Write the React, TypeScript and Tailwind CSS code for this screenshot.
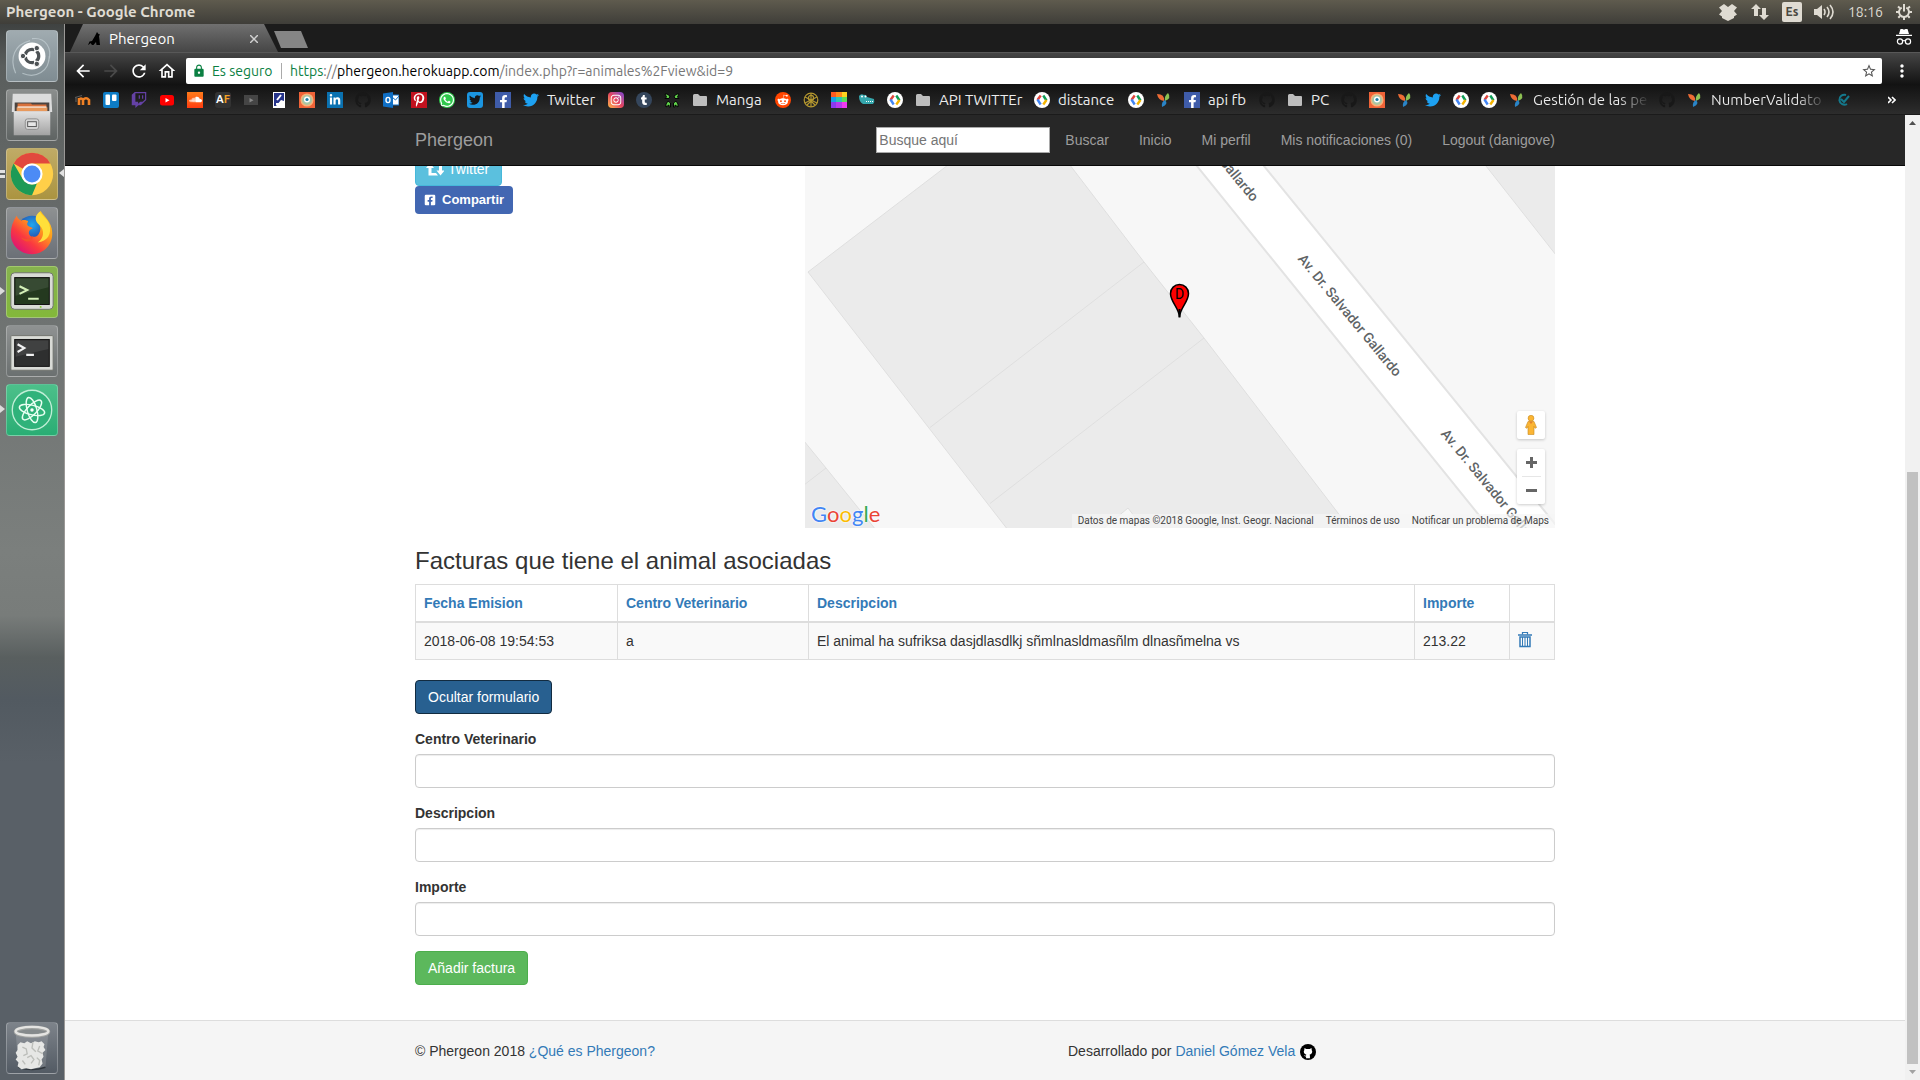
import React from "react";
import {
  FaFacebookF,
  FaFacebookSquare,
  FaGithub,
  FaInstagram,
  FaLinkedinIn,
  FaPinterestP,
  FaRedditAlien,
  FaSoundcloud,
  FaTumblr,
  FaTwitch,
  FaTwitter,
  FaWhatsapp,
} from "react-icons/fa";
import { MdArrowBack, MdArrowForward, MdLock, MdMoreVert, MdOutlineHome, MdRefresh, MdStarBorder } from "react-icons/md";

const UI_FONT = "font-['Ubuntu','Noto_Sans',sans-serif]";

/* ---------- System panel ---------- */

function SystemPanel() {
  return (
    <header className="flex h-6 shrink-0 items-center justify-between bg-linear-to-b from-[#5f5b4e] to-[#3f3e39] pr-2 pl-[6px] text-[#dfdbd2]">
      <h1 className="text-[15px] font-bold">Phergeon - Google Chrome</h1>
      <div className="flex items-center">
        <svg viewBox="0 0 18 17" className="mr-[14px] h-[17px] w-[18px]" fill="currentColor">
          <path d="M5 0 9 3l4-3 5 3.500-3 3.500 3 3.500-3 2V14l-6 3-6-3v-1.500l-3-2L3 7 0 3.500z" />
        </svg>
        <svg viewBox="0 0 18 16" className="mr-[13px] h-4 w-[18px]" fill="currentColor">
          <path d="M5 0 10 5H7v7H3V5H0zM13 16 8 11h3V4h4v7h3z" />
        </svg>
        <span className="mr-3 flex size-5 items-center justify-center rounded-[2px] bg-[#dfdbd2] text-[12px] font-semibold text-[#4a483f]">Es</span>
        <svg viewBox="0 0 20 16" className="mr-[14px] h-4 w-5" fill="currentColor">
          <path d="M0 5h3l5-4v14l-5-4H0z" />
          <path d="M10 5q2 3 0 6M13 3q4 5 0 10M16 1q6 7 0 14" fill="none" stroke="currentColor" strokeWidth="1.600" />
        </svg>
        <span className="mr-[13px] text-[14px]">18:16</span>
        <svg viewBox="0 0 16 16" className="size-4" fill="none" stroke="currentColor">
          <path d="M5.700 3.600a5 5 0 1 0 4.600 0" strokeWidth="2" />
          <path d="M8 0v7.500" strokeWidth="2" />
          <path d="M2 2.500 4 4.300M12 4.300l2-1.800M0 8h3M13 8h3M2.300 13.700 4 12M12 12l1.700 1.700M8 13v3" strokeWidth="2" />
        </svg>
      </div>
    </header>
  );
}

/* ---------- Launcher ---------- */

function UbuntuIcon() {
  return (
    <svg viewBox="0 0 52 52" className="size-full">
      <g fill="none" stroke="#c5d0d4" strokeWidth="1.200" opacity=".7">
        <path d="M26 8C40 6 48 18 43 32M9 44C2 28 8 14 24 10M44 26C44 42 30 50 16 44" />
      </g>
      <circle cx="26" cy="26" r="14" fill="#fff" />
      <circle cx="26" cy="26" r="7" fill="none" stroke="#4d5255" strokeWidth="3.400" strokeDasharray="12.4 2.26" strokeDashoffset="-8.5" />
      <g fill="#4d5255" stroke="#fff" strokeWidth="1">
        <circle cx="16.600" cy="26" r="2.800" />
        <circle cx="31" cy="17.800" r="2.800" />
        <circle cx="31" cy="34.200" r="2.800" />
      </g>
    </svg>
  );
}

function FilesIcon() {
  return (
    <svg viewBox="0 0 52 52" className="size-full">
      <defs>
        <linearGradient id="cabinet" x1="0" y1="0" x2="0" y2="1">
          <stop offset="0" stopColor="#e2e2e2" />
          <stop offset="1" stopColor="#a2a2a2" />
        </linearGradient>
      </defs>
      <path d="M6 4h40l1 19H5z" fill="#dcdcdc" />
      <path d="M8 13h36v9H8z" fill="#4b4440" />
      <path d="M11 14h14l1 1h15v7H11z" fill="#d9703a" />
      <path d="M10 18h32v4H10z" fill="#e8995c" />
      <path d="M11 17h30v1.500H11z" fill="#f7e4d4" />
      <path d="M7 22h38v25H7z" fill="url(#cabinet)" />
      <rect x="19" y="30" width="14" height="11" rx="2.500" fill="#d4d4d4" stroke="#8f8f8f" />
      <rect x="21.500" y="33" width="9" height="5" fill="#e6e6e6" stroke="#555" />
    </svg>
  );
}

function ChromeIcon() {
  return (
    <svg viewBox="-26 -26 52 52" className="size-full">
      <circle r="22" fill="#ffcf48" />
      <path d="M0-22A22 22 0 0 1 19.05-11H0A11 11 0 0 0-9.53-5.5L-19.05-11A22 22 0 0 1 0-22z" fill="#e2483d" />
      <path d="M-19.05-11-9.53 5.5A11 11 0 0 0 5.2 9.6L0 22A22 22 0 0 1-19.05-11z" fill="#1d9a56" />
      <circle r="11" fill="#fff" />
      <circle r="8.800" fill="#4c8bf5" />
    </svg>
  );
}

function FirefoxIcon() {
  return (
    <svg viewBox="0 0 52 52" className="size-full">
      <defs>
        <linearGradient id="fox" x1="1" y1="0" x2=".2" y2="1">
          <stop offset="0" stopColor="#ffe226" />
          <stop offset=".4" stopColor="#ff9a1c" />
          <stop offset=".7" stopColor="#fb3a3f" />
          <stop offset="1" stopColor="#d80f7c" />
        </linearGradient>
        <radialGradient id="globe" cx=".5" cy=".3">
          <stop offset="0" stopColor="#1fa8f0" />
          <stop offset="1" stopColor="#2648a8" />
        </radialGradient>
      </defs>
      <circle cx="26" cy="24" r="16" fill="url(#globe)" />
      <path
        d="M10 8c1 2 2 4 5 5 3-1 6 0 7 1-2 3-1 5 3 6l2 1c-3 1-5 3-4 6 1 4 8 4 10 0 4-6 0-12-3-15 0-3 2-7 5-9 3 5 12 12 12 22 1 13-9 23-21 23S4 39 4 27c0-7 2-13 6-19z"
        fill="url(#fox)"
      />
      <path d="M34 4c-6 5-5 10 0 14 5 5 5 13-2 18 10-1 15-9 12-19-2-6-7-8-10-13z" fill="#ffdf3a" />
      <path d="M14 30c4 3 8 3 13-1 0 6-8 9-13 1z" fill="#f3502f" />
    </svg>
  );
}

function TerminalIcon({ green }: { green?: boolean }) {
  return (
    <svg viewBox="0 0 52 52" className="size-full">
      <rect x="4" y={green ? 6 : 10} width="44" height={green ? 38 : 36} rx={green ? 4 : 1} fill="#d9dbd6" stroke="#6f736c" />
      <rect x="8" y={green ? 11 : 14} width="36" height="28" fill={green ? "#24391f" : "#2e2f2f"} stroke="#111" />
      <path d={green ? "M9 12h34v9L9 30z" : "M9 15h34v9L9 32z"} fill="#fff" opacity=".09" />
      <path
        d={green ? "m13 20 8 4-8 4M22 33h11" : "m11 19 7 4-7 4M20 30h8"}
        fill="none"
        stroke={green ? "#d4f0b8" : "#f1f1f1"}
        strokeWidth="2.200"
      />
      {green && <circle cx="35" cy="41.500" r="1" fill="#7fcf2c" />}
    </svg>
  );
}

function AtomIcon() {
  return (
    <svg viewBox="-26 -26 52 52" className="size-full" fill="none" stroke="#e8fff2">
      <circle r="20.500" fill="#2fb27a" stroke="#bfeed6" strokeWidth="1.400" />
      <g strokeWidth="1.500">
        <ellipse rx="13.500" ry="5" transform="rotate(14)" />
        <ellipse rx="13.500" ry="5" transform="rotate(74)" />
        <ellipse rx="13.500" ry="5" transform="rotate(134)" />
      </g>
      <circle r="1.800" fill="#fff" stroke="none" />
    </svg>
  );
}

function TrashIcon() {
  return (
    <svg viewBox="0 0 52 52" className="size-full">
      <path d="M9 10 12 46q14 4 28 0l3-36z" fill="#fff" opacity=".14" />
      <path d="M12 46q14 5 28 0" fill="none" stroke="#2f353b" strokeWidth="1.500" />
      <path
        d="m11 23 3-3 4 1 3-2 4 2 4-2 4 1 3-1 3 3-1 3 2 3-3 3 1 4-2 3 1 4-3 4-5 1-4 1-5-1-5 1-4-3 1-4-3-3 2-3-2-4 2-3z"
        fill="#e6e7e5"
      />
      <path d="m16 25 4 2 1 5-4 2M27 20l-1 6 4 4M34 24l-2 5 5 3M21 36l4-2 3 4-3 4M16 39l3 4M31 36l3 3-1 5" fill="none" stroke="#bcbeba" strokeWidth="1.400" />
      <ellipse cx="26" cy="9" rx="17" ry="4.500" fill="#858a8c" stroke="#a2a4a2" strokeWidth="4" />
      <ellipse cx="26" cy="8.500" rx="17" ry="4.500" fill="none" stroke="#e4e4e2" strokeWidth="2.500" />
    </svg>
  );
}

type Tile = { name: string; tile: string; icon: React.ReactNode; marker?: "one" | "two"; focused?: boolean };

const tiles: Tile[] = [
  { name: "Ubuntu", tile: "bg-linear-to-b from-[#a0abb0] to-[#7f8c92]", icon: <UbuntuIcon /> },
  { name: "Archivos", tile: "bg-linear-to-b from-[#8b8e8d] to-[#5f6463]", icon: <FilesIcon /> },
  { name: "Chrome", tile: "bg-linear-to-b from-[#c0ab66] to-[#ab9440]", icon: <ChromeIcon />, marker: "two", focused: true },
  { name: "Firefox", tile: "bg-linear-to-b from-[#8e9192] to-[#6b7077]", icon: <FirefoxIcon /> },
  { name: "Terminal", tile: "bg-linear-to-b from-[#86b24e] to-[#83b83a]", icon: <TerminalIcon green />, marker: "one" },
  { name: "UXTerm", tile: "bg-linear-to-b from-[#8f9292] to-[#6b7070]", icon: <TerminalIcon /> },
  { name: "Atom", tile: "bg-linear-to-b from-[#4cc08a] to-[#29ad74]", icon: <AtomIcon />, marker: "one" },
];

function LauncherTile({ item }: { item: Tile }) {
  return (
    <div className="relative flex justify-center">
      {item.marker === "one" && <span className="absolute top-[21px] left-0 h-2 w-[5px] bg-[#dcdcdc] [clip-path:polygon(0_0,100%_50%,0_100%)]" />}
      {item.marker === "two" && <span className="absolute top-[22px] left-0 h-2 w-[5px] border-y-3 border-[#e2e2e2]" />}
      <button aria-label={item.name} className={`size-[52px] rounded-[4px] border border-white/25 ${item.tile}`}>
        {item.icon}
      </button>
      {item.focused && <span className="absolute top-[21px] right-0 h-2 w-[5px] bg-[#e2e2e2] [clip-path:polygon(100%_0,0_50%,100%_100%)]" />}
    </div>
  );
}

function Launcher() {
  return (
    <nav
      aria-label="Lanzador"
      className="flex w-[65px] shrink-0 flex-col justify-between border-r border-[#9a9896] bg-[linear-gradient(to_bottom,#3f4241_0%,#5a5e5d_4%,#6d7170_25%,#7b7f7d_50%,#787c7a_56%,#595f5f_60%,#525a61_64%,#596067_70%,#596067_100%)] pt-[6px] pb-[6px]"
    >
      <div className="flex flex-col gap-[7px]">
        {tiles.map((t) => (
          <LauncherTile key={t.name} item={t} />
        ))}
      </div>
      <LauncherTile item={{ name: "Papelera", tile: "bg-linear-to-b from-[#7d838a] to-[#535b64]", icon: <TrashIcon /> }} />
    </nav>
  );
}

/* ---------- Browser chrome ---------- */

function TabStrip() {
  return (
    <div className="flex h-7 shrink-0 items-start justify-between bg-[#1c1c1c] pl-[5px]">
      <div className="flex items-start">
        <div className="flex h-7 w-[208px] items-center bg-linear-to-b from-[#707070] to-[#464646] pt-[2px] pr-5 pl-[18px] [clip-path:polygon(13px_0,194px_0,100%_100%,0_100%)]">
          <svg viewBox="0 0 14 14" className="size-[14px] text-black" fill="currentColor">
            <path d="M9 0l1.500 2L12 2.500 11 4l.5 4 .5 5H8.500l-.5-3-2.500 3H4L2.500 11 1 12.500 0 13l1.500-3.500L4 9l3-5z" />
          </svg>
          <span className="ml-[7px] grow text-[15px] leading-5 text-white">Phergeon</span>
          <button aria-label="Cerrar pestaña" className="text-[#d0d0d0]">
            <svg viewBox="0 0 8 8" className="size-2" stroke="currentColor" strokeWidth="1.500">
              <path d="M0 0l8 8M8 0 0 8" />
            </svg>
          </button>
        </div>
        <button aria-label="Nueva pestaña" className="-ml-1 mt-[7px] h-[17px] w-[34px] bg-[#858585] [clip-path:polygon(0_0,27px_0,100%_100%,7px_100%)]" />
      </div>
      <svg viewBox="0 0 16 16" className="mt-[5px] mr-2 size-4" fill="#fff">
        <path d="M4.500 0h2L8 .7 9.500 0h2L13 5H3zM0 5.800h16v1.200H0z" />
        <g fill="none" stroke="#fff" strokeWidth="1.200">
          <circle cx="4" cy="12.500" r="2.600" />
          <circle cx="12" cy="12.500" r="2.600" />
          <path d="M6.600 12q1.400-1 2.800 0" />
        </g>
      </svg>
    </div>
  );
}

function Toolbar() {
  return (
    <div className="flex h-[33px] shrink-0 items-center border-t border-[#585858] bg-linear-to-b from-[#454545] to-[#121212] pt-[5px] pr-2 pb-px pl-2 text-white">
      <button aria-label="Atrás" className="mr-2"><MdArrowBack className="size-5" /></button>
      <button aria-label="Adelante" className="mr-2 text-[#4a4a4a]"><MdArrowForward className="size-5" /></button>
      <button aria-label="Recargar" className="mr-2"><MdRefresh className="size-5" /></button>
      <button aria-label="Inicio" className="mr-[9px]"><MdOutlineHome className="size-5" /></button>
      <div className="flex h-[26px] grow items-center rounded-[2px] bg-white pr-[5px] pl-[6px] text-[14px]">
        <MdLock className="size-[14px] text-[#0b8043]" />
        <span className="ml-[6px] w-[61px] whitespace-nowrap text-[#0b8043]">Es seguro</span>
        <span className="mx-2 h-4 w-px bg-[#aaa]" />
        <span className="grow text-[#777]">
          <span className="text-[#0b8043]">https</span>://<span className="text-black">phergeon.herokuapp.com</span>/index.php?r=animales%2Fview&amp;id=9
        </span>
        <button aria-label="Añadir a marcadores" className="text-[#555]"><MdStarBorder className="size-4" /></button>
      </div>
      <button aria-label="Menú" className="ml-[10px]"><MdMoreVert className="size-5" /></button>
    </div>
  );
}

const Box = ({ bg, children }: { bg: string; children: React.ReactNode }) => (
  <span className={`flex size-4 items-center justify-center overflow-hidden text-white ${bg}`}>{children}</span>
);

const DevIcon = () => (
  <svg viewBox="0 0 16 16" className="size-4" fill="none" strokeWidth="2.400">
    <circle cx="8" cy="8" r="8" fill="#fff" />
    <path d="M6.700 3.500 3.500 8" stroke="#e0443a" />
    <path d="M3.500 7.500 6.700 12.500" stroke="#4285f4" />
    <path d="M9.300 3.500l3.200 5" stroke="#0f9d58" />
    <path d="M12.500 8l-3.200 4.500" stroke="#f4b400" />
  </svg>
);

const YiiIcon = () => (
  <svg viewBox="0 0 16 16" className="size-4">
    <path d="M1 2q8 0 7 7Q2 8 1 2z" fill="#ef6c35" />
    <path d="M12 1q4 5-3 8-1-5 3-8z" fill="#8dc153" />
    <path d="M9 8q4 4-3 7-1-5 3-7z" fill="#2a84c6" />
  </svg>
);

const OrangeIcon = () => (
  <svg viewBox="0 0 16 16" className="size-4">
    <path d="M0 0h16v16H0z" fill="#ef6338" />
    <circle cx="8" cy="8" r="5.800" fill="#a9c6a4" stroke="#f6b27a" strokeWidth="1.500" />
    <circle cx="8" cy="7.500" r="3" fill="#fff" />
    <circle cx="8" cy="7.500" r="1.600" fill="#1d7fa8" />
  </svg>
);

const GithubDark = () => <FaGithub className="size-4 text-[#181818]" />;
const Folder = () => (
  <svg viewBox="0 0 16 16" className="size-4" fill="#bdbdbd">
    <path d="M2.500 2H6l2 2h6q1 0 1 1v8q0 1-1 1H2q-1 0-1-1V3.500Q1 2 2.500 2z" />
  </svg>
);
const TwitterBird = () => <FaTwitter className="size-4 text-[#1da1f2]" />;

const swatches = ["#ff5a1f", "#ff8a1c", "#ffd21f", "#18a0e8", "#2fc6b0", "#5edb5a", "#8a3af0", "#b83af0", "#f03af0"];

type Bookmark = { icon: React.ReactNode; label?: string; width?: string; fade?: boolean };

const bookmarks: Bookmark[] = [
  {
    icon: (
      <svg viewBox="0 0 16 16" className="size-4" fill="none" stroke="#f08024" strokeWidth="2.600">
        <path d="M4 13V6M8 13V8q3-3.500 6 0v5M4 8q2-3 4 0" />
        <path d="M0 5.500l7-2M1 5v5" stroke="#5a5a5a" strokeWidth="1.200" />
      </svg>
    ),
  },
  {
    icon: (
      <svg viewBox="0 0 16 16" className="size-4">
        <rect width="16" height="16" rx="2" fill="#0d7cc6" />
        <rect x="2.500" y="2.500" width="4.500" height="10.500" rx="1" fill="#fff" />
        <rect x="9" y="2.500" width="4.500" height="6.500" rx="1" fill="#fff" />
      </svg>
    ),
  },
  { icon: <FaTwitch className="size-4 text-[#6441a5]" /> },
  {
    icon: (
      <svg viewBox="0 0 16 16" className="size-4">
        <rect x="1" y="3" width="14" height="10.500" rx="2.500" fill="#f00" />
        <path d="M6.500 6v4.500l4-2.250z" fill="#fff" />
      </svg>
    ),
  },
  { icon: <Box bg="bg-linear-to-b from-[#ff7a1a] to-[#ff3a10]"><FaSoundcloud className="size-[13px]" /></Box> },
  { icon: <Box bg="rounded-[3px] bg-[#333]"><span className="text-[11px] font-bold">A<span className="text-[#f4a125]">F</span></span></Box> },
  {
    icon: (
      <svg viewBox="0 0 16 16" className="size-4">
        <rect x="1" y="3" width="14" height="10" fill="#454545" />
        <path d="M6.500 6v4.500l4-2.250z" fill="#888" />
      </svg>
    ),
  },
  {
    icon: (
      <svg viewBox="0 0 16 16" className="size-4">
        <path d="M2 0h12v16H2z" fill="#fff" />
        <path d="M3 1h10v8l-3-1-5 6H3z" fill="#26348b" />
        <path d="M10 3 6 8M5 12h6" stroke="#fff" strokeWidth="2" />
      </svg>
    ),
  },
  { icon: <OrangeIcon /> },
  { icon: <Box bg="bg-[#0a71b0]"><FaLinkedinIn className="size-3" /></Box> },
  { icon: <GithubDark /> },
  {
    icon: (
      <svg viewBox="0 0 16 16" className="size-4">
        <path d="M8 3h8v10H8z" fill="#fff" stroke="#0f6fc5" />
        <path d="M9 5l3.500 3L16 4" stroke="#0f6fc5" fill="none" />
        <path d="M0 1.500 10 0v16L0 14.500z" fill="#0f6fc5" />
        <ellipse cx="5" cy="8" rx="2" ry="2.600" fill="none" stroke="#fff" strokeWidth="1.400" />
      </svg>
    ),
  },
  { icon: <Box bg="bg-[#c2121f]"><FaPinterestP className="size-[14px]" /></Box> },
  { icon: <Box bg="rounded-full bg-[#2fc94c]"><FaWhatsapp className="size-4" /></Box> },
  { icon: <Box bg="rounded-[3px] bg-[#1b95e0]"><FaTwitter className="size-3 text-[#14171a]" /></Box> },
  { icon: <Box bg="bg-[#3f5ca9]"><FaFacebookF className="mt-1 size-[13px]" /></Box> },
  { icon: <TwitterBird />, label: "Twitter", width: "w-[49px]" },
  { icon: <Box bg="rounded-[4px] bg-linear-to-tr from-[#fdb441] via-[#e4405f] to-[#7a3ad0]"><FaInstagram className="size-3" /></Box> },
  { icon: <Box bg="rounded-full bg-[#35465c]"><FaTumblr className="size-[10px]" /></Box> },
  {
    icon: (
      <svg viewBox="0 0 16 16" className="size-4" fill="#5fd04a" stroke="#050505">
        <path d="M1 2h2l3 2-1 2.500H1L2.500 5zM15 2h-2l-3 2 1 2.500h4L13.500 5zM2 15v-3l2-3 2.500 2v4H5v-2zM14 15v-3l-2-3-2.500 2v4H11v-2z" />
      </svg>
    ),
  },
  { icon: <Folder />, label: "Manga", width: "w-[47px]" },
  { icon: <Box bg="rounded-full bg-[#ff4500]"><FaRedditAlien className="size-3" /></Box> },
  {
    icon: (
      <svg viewBox="0 0 16 16" className="size-4" fill="none" stroke="#b3962f" strokeWidth="1.200">
        <circle cx="8" cy="8" r="6.800" />
        <circle cx="8" cy="6" r="2.600" />
        <path d="M8 1v14M2 5l12 6M14 5 2 11M4 13l4-4 4 4" />
      </svg>
    ),
  },
  {
    icon: (
      <span className="grid size-4 grid-cols-3">
        {swatches.map((c) => (
          <span key={c} style={{ backgroundColor: c }} />
        ))}
      </span>
    ),
  },
  {
    icon: (
      <svg viewBox="0 0 16 16" className="size-4">
        <path d="M0 4q2-3 5-1 2-1 3 2l7 2q1 3-1 5H4Q0 10 0 4z" fill="#35a7ad" />
        <circle cx="3" cy="4.500" r="1" fill="#fff" />
        <circle cx="6.500" cy="4.500" r="1" fill="#fff" />
        <path d="M7 9.500h8" stroke="#fff" strokeDasharray="1 1" />
      </svg>
    ),
  },
  { icon: <DevIcon /> },
  { icon: <Folder />, label: "API TWITTEr", width: "w-[83px]" },
  { icon: <DevIcon />, label: "distance", width: "w-[58px]" },
  { icon: <DevIcon /> },
  { icon: <YiiIcon /> },
  { icon: <Box bg="bg-[#3f5ca9]"><FaFacebookF className="mt-1 size-[13px]" /></Box>, label: "api fb", width: "w-[39px]" },
  { icon: <GithubDark /> },
  { icon: <Folder />, label: "PC", width: "w-[18px]" },
  { icon: <GithubDark /> },
  { icon: <OrangeIcon /> },
  { icon: <YiiIcon /> },
  { icon: <TwitterBird /> },
  { icon: <DevIcon /> },
  { icon: <DevIcon /> },
  { icon: <YiiIcon />, label: "Gestión de las pe", width: "w-[114px]", fade: true },
  { icon: <GithubDark /> },
  { icon: <YiiIcon />, label: "NumberValidato", width: "w-[114px]", fade: true },
  {
    icon: (
      <svg viewBox="0 0 16 16" className="size-4" fill="none" stroke="#14798c" strokeWidth="2">
        <path d="M9 3a5 5 0 1 0 1 9M4 7l3 3 5-6" />
      </svg>
    ),
  },
];

function BookmarksBar() {
  return (
    <div className="flex h-[30px] shrink-0 items-center border-b border-[#1b1b1b] bg-linear-to-b from-[#131313] to-[#2d2d2d] pr-6 pl-[10px]">
      <div className="flex min-w-0 grow items-center gap-3 overflow-hidden">
        {bookmarks.map((b, i) => (
          <a key={i} href="#" aria-label={b.label ?? "Marcador"} className="flex shrink-0 items-center gap-2">
            {b.icon}
            {b.label && (
              <span
                className={`text-[15px] leading-5 whitespace-nowrap ${b.width} ${
                  b.fade ? "bg-linear-to-r from-[#ececec] from-75% to-[#333] bg-clip-text text-transparent" : "text-[#ececec]"
                }`}
              >
                {b.label}
              </span>
            )}
          </a>
        ))}
      </div>
      <button aria-label="Más marcadores" className="text-white">
        <svg viewBox="0 0 8 8" className="size-2" fill="none" stroke="currentColor" strokeWidth="1.600">
          <path d="M0 1l3 3-3 3M4 1l3 3-3 3" />
        </svg>
      </button>
    </div>
  );
}

/* ---------- Web page ---------- */

const navLinks = ["Inicio", "Mi perfil", "Mis notificaciones (0)", "Logout (danigove)"];

function Navbar() {
  return (
    <div className="relative z-10 border-b border-[#080808] bg-[#272727] text-[#9d9d9d]">
      <div className="mx-auto flex h-[50px] max-w-[1140px] items-center justify-between">
        <a href="#" className="text-[18px] leading-5">Phergeon</a>
        <nav className="flex items-center text-[14px] leading-5">
          <input
            aria-label="Busque aquí"
            placeholder="Busque aquí"
            className="h-[26px] w-[174px] border border-[#a9a9a9] bg-white px-[2px] text-black placeholder:text-[#757575]"
          />
          <button className="ml-[15px]">Buscar</button>
          {navLinks.map((l) => (
            <a key={l} href="#" className="ml-[30px]">{l}</a>
          ))}
        </nav>
      </div>
    </div>
  );
}

const streetLabels = [
  [1207, 140],
  [1350, 315],
  [1493, 490],
];

function StreetMap() {
  return (
    <section aria-label="Mapa" className="relative h-[376px] w-[750px] overflow-hidden bg-[#f7f7f7] font-['Roboto',sans-serif]">
      <svg viewBox="805 152 750 376" preserveAspectRatio="xMidYMid slice" className="size-full">
        <g fill="#ebebeb" stroke="#dfdfdf" strokeWidth="1">
          <path d="M965 152 808 272 1008 530H1351L1204 338 1144 262 1060 152z" />
          <path d="M930 427.500 1144 262M990 503.500 1204 338" fill="none" />
          <path d="M804 441 826 468 876 530H804zM826 468 804 485" />
          <path d="M1475 152 1556 255V151z" />
          <path d="M1103 529 1128 508 1144 529z" fill="#f7f7f7" />
        </g>
        <path d="M1184 150 1491 530H1560L1251 150z" fill="#fff" stroke="#e3e3e3" strokeWidth="2" />
        <g fill="#5f6466" fontSize="14" fontWeight="500" textAnchor="middle">
          {streetLabels.map(([x, y]) => (
            <text key={x} transform={`translate(${x} ${y}) rotate(50.500)`} dy="5">
              Av. Dr. Salvador Gallardo
            </text>
          ))}
        </g>
        <g transform="translate(1179.500 284)">
          <path d="M0 33C-.5 24-9 18-9 9.500A9 9 0 0 1 9 9.500C9 18 .5 24 0 33z" fill="#f00" stroke="#000" strokeWidth="1.500" />
          <path d="M0 25v8.500" stroke="#000" strokeWidth="2" />
          <text y="14.500" textAnchor="middle" fontSize="14">D</text>
        </g>
      </svg>
      <a
        href="#"
        className="absolute bottom-0 left-[6px] flex font-['Lato',sans-serif] text-[22px] leading-7 [text-shadow:0_0_2px_#fff,0_0_2px_#fff]"
      >
        <span className="text-[#4285f4]">G</span>
        <span className="text-[#ea4335]">o</span>
        <span className="text-[#fbbc05]">o</span>
        <span className="text-[#4285f4]">g</span>
        <span className="text-[#34a853]">l</span>
        <span className="text-[#ea4335]">e</span>
      </a>
      <div className="absolute right-[10px] bottom-6 flex w-7 flex-col gap-[10px]">
        <button aria-label="Street View" className="flex h-7 items-center justify-center rounded-[2px] bg-white shadow-[0_1px_3px_rgba(0,0,0,0.2)]">
          <svg viewBox="0 0 12 20" className="h-5 w-3" fill="#fbb534" stroke="#c78a1f" strokeWidth=".6">
            <circle cx="6" cy="3.200" r="2.900" />
            <path d="M3 6.500h6l2.500 6-1.500.8-1-2V19.500H3v-8.200l-1 2-1.500-.8z" />
            <path d="M4 6.500h4L6 9z" fill="#e5812a" stroke="none" />
          </svg>
        </button>
        <div className="flex flex-col items-center rounded-[2px] bg-white text-[#666] shadow-[0_1px_3px_rgba(0,0,0,0.2)]">
          <button aria-label="Acercar" className="flex h-[27px] w-full items-center justify-center">
            <svg viewBox="0 0 11 11" className="size-[11px]" fill="currentColor"><path d="M4 0h3v4h4v3H7v4H4V7H0V4h4z" /></svg>
          </button>
          <span className="h-px w-[19px] bg-[#e6e6e6]" />
          <button aria-label="Alejar" className="flex h-[27px] w-full items-center justify-center">
            <svg viewBox="0 0 11 11" className="size-[11px]" fill="currentColor"><path d="M0 4h11v3H0z" /></svg>
          </button>
        </div>
      </div>
      <div className="absolute right-0 bottom-0 flex h-[14px] text-[10px] leading-[14px] whitespace-nowrap text-[#444]">
        <span className="bg-[#f5f5f5]/70 px-[6px]">Datos de mapas ©2018 Google, Inst. Geogr. Nacional</span>
        <a href="#" className="bg-[#f5f5f5]/70 px-[6px]">Términos de uso</a>
        <a href="#" className="bg-[#f5f5f5]/70 px-[6px]">Notificar un problema de Maps</a>
      </div>
    </section>
  );
}

const fields = ["Centro Veterinario", "Descripcion", "Importe"];

function InvoiceTable() {
  return (
    <table className="mb-5 w-full table-fixed border-collapse border border-[#ddd] text-left leading-5">
      <colgroup>
        <col className="w-[202px]" />
        <col className="w-[191px]" />
        <col />
        <col className="w-[95px]" />
        <col className="w-[45px]" />
      </colgroup>
      <thead>
        <tr className="border-b-2 border-[#ddd] font-bold text-[#337ab7]">
          {["Fecha Emision", "Centro Veterinario", "Descripcion", "Importe"].map((h) => (
            <th key={h} className="border-x border-[#ddd] p-2">
              <a href="#">{h}</a>
            </th>
          ))}
          <th className="border-x border-[#ddd] p-2" />
        </tr>
      </thead>
      <tbody>
        <tr className="bg-[#f9f9f9]">
          {["2018-06-08 19:54:53", "a", "El animal ha sufriksa dasjdlasdlkj sñmlnasldmasñlm dlnasñmelna vs", "213.22"].map((c) => (
            <td key={c} className="border-x border-[#ddd] p-2">{c}</td>
          ))}
          <td className="border-x border-[#ddd] px-2 pt-[7px] pb-[9px]">
            <a href="#" aria-label="Eliminar" className="block w-4 text-[#337ab7]">
              <svg viewBox="0 0 14 16" className="h-4 w-[14px]" fill="none" stroke="currentColor">
                <path d="M0 3h14" strokeWidth="1.500" />
                <path d="M4.500 2.500v-2h5v2" strokeWidth="1.200" />
                <path d="M2 5v9.500h10V5z" strokeWidth="1.500" />
                <path d="M4.500 5v9M7 5v9M9.500 5v9" />
              </svg>
            </a>
          </td>
        </tr>
      </tbody>
    </table>
  );
}

function AnimalPage() {
  return (
    <div className="flex min-w-0 grow flex-col bg-white font-['Liberation_Sans',Arial,sans-serif] text-[14px] leading-5 text-[#333]">
      <Navbar />
      <main className="mx-auto -mt-[14px] w-full max-w-[1140px] grow pb-[35px]">
        <div className="flex justify-between">
          <div className="flex flex-col items-start">
            <a href="#" className="flex h-[34px] items-center gap-1 rounded-[4px] border border-[#46b8da] bg-[#5bc0de] pr-3 pl-[10px] text-white">
              <svg viewBox="0 0 18 14" className="h-[14px] w-[18px]" fill="currentColor">
                <path d="M4 1 8 6H5.500v5H10l2 2.500H2.500V6H0zM14.500 13.500l-4-5H13v-5H8.500L6.500 1H16v7.500h2.500z" />
              </svg>
              Twitter
            </a>
            <button className="flex h-7 items-center gap-[6px] rounded-[4px] bg-[#4267b2] px-[9px] text-[13px] font-bold text-white">
              <FaFacebookSquare className="size-3" />
              Compartir
            </button>
          </div>
          <StreetMap />
        </div>
        <h3 className="mt-5 mb-[10px] text-[24px] leading-[26px]">Facturas que tiene el animal asociadas</h3>
        <InvoiceTable />
        <button className="h-[34px] rounded-[4px] border border-[#122b40] bg-[#286090] px-3 text-white">Ocultar formulario</button>
        <form>
          {fields.map((f) => (
            <div key={f} className="mt-[15px]">
              <label htmlFor={f} className="mb-[5px] block font-bold">{f}</label>
              <input
                id={f}
                className="block h-[34px] w-full rounded-[4px] border border-[#ccc] bg-white px-3 shadow-[inset_0_1px_1px_rgba(0,0,0,0.075)]"
              />
            </div>
          ))}
          <button type="button" className="mt-[15px] h-[34px] rounded-[4px] border border-[#4cae4c] bg-[#5cb85c] px-3 text-white">
            Añadir factura
          </button>
        </form>
      </main>
      <footer className="border-t border-[#ddd] bg-[#f5f5f5]">
        <div className="mx-auto grid h-[59px] max-w-[1140px] grid-cols-[653fr_487fr] items-center">
          <p>
            © Phergeon 2018 <a href="#" className="text-[#337ab7]">¿Qué es Phergeon?</a>
          </p>
          <p className="flex items-center">
            <span>
              Desarrollado por <a href="#" className="text-[#337ab7]">Daniel Gómez Vela</a>
            </span>
            <a href="#" aria-label="GitHub" className="mt-[2px] ml-[5px] flex size-4 items-center justify-center rounded-full bg-black text-white">
              <svg viewBox="0 0 16 16" className="size-[14px]" fill="currentColor">
                <path d="M4 3.500 6 4.500h4l2-1 .3 2.500q1 1.500.2 3.200-.8 1.600-2.700 1.800.4.500.4 1.500V15H5.800v-2Q4 13.500 3.300 11.500 5 12.500 5.800 12q0-.7.4-1-2-.2-2.700-1.800Q2.700 7.500 3.700 6z" />
              </svg>
            </a>
          </p>
        </div>
      </footer>
    </div>
  );
}

function Scrollbar() {
  return (
    <div aria-hidden="true" className="flex w-[15px] shrink-0 flex-col items-center bg-[#f1f1f1] py-[6px]">
      <span className="h-1 w-[7px] bg-[#505050] [clip-path:polygon(50%_0,100%_100%,0_100%)]" />
      <span className="grow-[347]" />
      <span className="w-[11px] grow-[591] bg-[#c1c1c1]" />
      <span className="mt-[6px] h-1 w-[7px] bg-[#a3a3a3] [clip-path:polygon(0_0,100%_0,50%_100%)]" />
    </div>
  );
}

export default function App() {
  return (
    <div className={`flex min-h-screen flex-col bg-white ${UI_FONT}`}>
      <SystemPanel />
      <div className="flex grow">
        <Launcher />
        <div className="flex min-w-0 grow flex-col">
          <TabStrip />
          <Toolbar />
          <BookmarksBar />
          <div className="flex grow">
            <AnimalPage />
            <Scrollbar />
          </div>
        </div>
      </div>
    </div>
  );
}
